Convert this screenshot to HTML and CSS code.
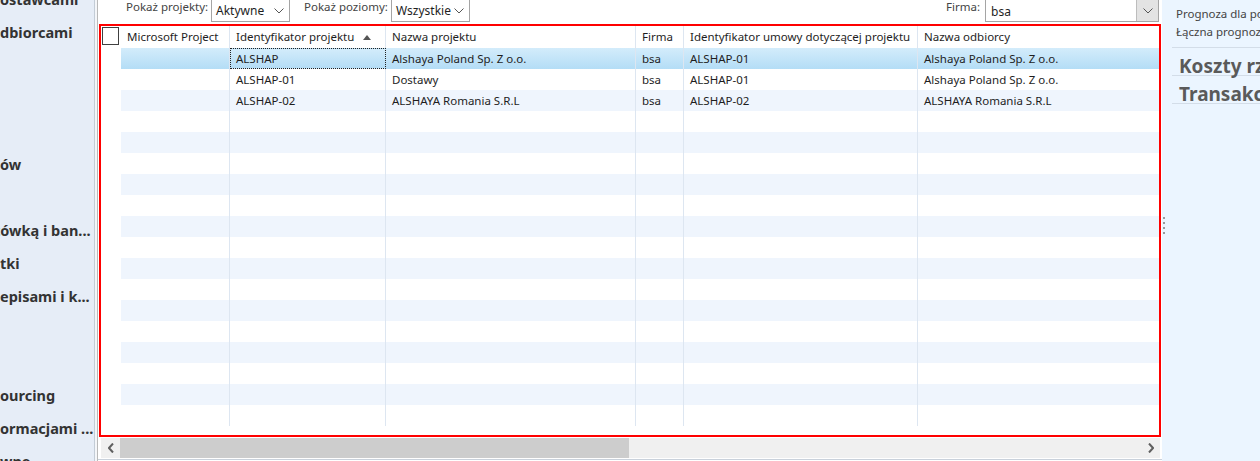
FILE: index.html
```html
<!DOCTYPE html>
<html lang="pl">
<head>
<meta charset="utf-8">
<title>Projekty</title>
<link rel="stylesheet" href="styles.css">
</head>
<body>
<div class="app">
  <nav class="nav">
    <div class="nav-list">
      <div class="nav-item">ostawcami</div>
      <div class="nav-item">dbiorcami</div>
      <div class="nav-item"></div>
      <div class="nav-item"></div>
      <div class="nav-item"></div>
      <div class="nav-item">ów</div>
      <div class="nav-item"></div>
      <div class="nav-item nav-shift">tówką i ban...</div>
      <div class="nav-item">tki</div>
      <div class="nav-item">episami i k...</div>
      <div class="nav-item"></div>
      <div class="nav-item"></div>
      <div class="nav-item">ourcing</div>
      <div class="nav-item">ormacjami ...</div>
      <div class="nav-item">wne</div>
    </div>
  </nav>
  <div class="split"></div>
  <main class="main">
    <div class="filters">
      <span class="flabel first">Pokaż projekty:</span>
      <div class="combo"><span>Aktywne</span><svg class="chev" viewBox="0 0 10 6" width="10" height="6"><path d="M0.5 0.5 L5 5 L9.5 0.5" fill="none" stroke="#555" stroke-width="1"/></svg></div>
      <span class="flabel second">Pokaż poziomy:</span>
      <div class="combo"><span>Wszystkie</span><svg class="chev" viewBox="0 0 10 6" width="10" height="6"><path d="M0.5 0.5 L5 5 L9.5 0.5" fill="none" stroke="#555" stroke-width="1"/></svg></div>
      <span class="fspacer"></span>
      <span class="flabel third">Firma:</span>
      <div class="lookup"><span class="lookup-val">bsa</span><span class="lookup-btn"><svg viewBox="0 0 10 6" width="10" height="6"><path d="M0.5 0.5 L5 5 L9.5 0.5" fill="none" stroke="#555" stroke-width="1"/></svg></span></div>
    </div>

    <div class="grid">
      <div class="row head">
        <div class="cell sel"><span class="check"></span></div>
        <div class="cell">Microsoft Project</div>
        <div class="cell sorted">Identyfikator projektu<svg class="sort" viewBox="0 0 8 5" width="8" height="5"><path d="M0 5 L4 0 L8 5 Z" fill="#555"/></svg></div>
        <div class="cell">Nazwa projektu</div>
        <div class="cell">Firma</div>
        <div class="cell">Identyfikator umowy dotyczącej projektu</div>
        <div class="cell">Nazwa odbiorcy</div>
      </div>
      <div class="row selected">
        <div class="cell sel"></div>
        <div class="cell"></div>
        <div class="cell focus">ALSHAP</div>
        <div class="cell">Alshaya Poland Sp. Z o.o.</div>
        <div class="cell">bsa</div>
        <div class="cell">ALSHAP-01</div>
        <div class="cell">Alshaya Poland Sp. Z o.o.</div>
      </div>
      <div class="row">
        <div class="cell sel"></div>
        <div class="cell"></div>
        <div class="cell">ALSHAP-01</div>
        <div class="cell">Dostawy</div>
        <div class="cell">bsa</div>
        <div class="cell">ALSHAP-01</div>
        <div class="cell">Alshaya Poland Sp. Z o.o.</div>
      </div>
      <div class="row alt">
        <div class="cell sel"></div>
        <div class="cell"></div>
        <div class="cell">ALSHAP-02</div>
        <div class="cell">ALSHAYA Romania S.R.L</div>
        <div class="cell">bsa</div>
        <div class="cell">ALSHAP-02</div>
        <div class="cell">ALSHAYA Romania S.R.L</div>
      </div>
      <div class="row"><div class="cell sel"></div><div class="cell"></div><div class="cell"></div><div class="cell"></div><div class="cell"></div><div class="cell"></div><div class="cell"></div></div>
      <div class="row alt"><div class="cell sel"></div><div class="cell"></div><div class="cell"></div><div class="cell"></div><div class="cell"></div><div class="cell"></div><div class="cell"></div></div>
      <div class="row"><div class="cell sel"></div><div class="cell"></div><div class="cell"></div><div class="cell"></div><div class="cell"></div><div class="cell"></div><div class="cell"></div></div>
      <div class="row alt"><div class="cell sel"></div><div class="cell"></div><div class="cell"></div><div class="cell"></div><div class="cell"></div><div class="cell"></div><div class="cell"></div></div>
      <div class="row"><div class="cell sel"></div><div class="cell"></div><div class="cell"></div><div class="cell"></div><div class="cell"></div><div class="cell"></div><div class="cell"></div></div>
      <div class="row alt"><div class="cell sel"></div><div class="cell"></div><div class="cell"></div><div class="cell"></div><div class="cell"></div><div class="cell"></div><div class="cell"></div></div>
      <div class="row"><div class="cell sel"></div><div class="cell"></div><div class="cell"></div><div class="cell"></div><div class="cell"></div><div class="cell"></div><div class="cell"></div></div>
      <div class="row alt"><div class="cell sel"></div><div class="cell"></div><div class="cell"></div><div class="cell"></div><div class="cell"></div><div class="cell"></div><div class="cell"></div></div>
      <div class="row"><div class="cell sel"></div><div class="cell"></div><div class="cell"></div><div class="cell"></div><div class="cell"></div><div class="cell"></div><div class="cell"></div></div>
      <div class="row alt"><div class="cell sel"></div><div class="cell"></div><div class="cell"></div><div class="cell"></div><div class="cell"></div><div class="cell"></div><div class="cell"></div></div>
      <div class="row"><div class="cell sel"></div><div class="cell"></div><div class="cell"></div><div class="cell"></div><div class="cell"></div><div class="cell"></div><div class="cell"></div></div>
      <div class="row alt"><div class="cell sel"></div><div class="cell"></div><div class="cell"></div><div class="cell"></div><div class="cell"></div><div class="cell"></div><div class="cell"></div></div>
      <div class="row"><div class="cell sel"></div><div class="cell"></div><div class="cell"></div><div class="cell"></div><div class="cell"></div><div class="cell"></div><div class="cell"></div></div>
      <div class="row alt"><div class="cell sel"></div><div class="cell"></div><div class="cell"></div><div class="cell"></div><div class="cell"></div><div class="cell"></div><div class="cell"></div></div>
      <div class="row"><div class="cell sel"></div><div class="cell"></div><div class="cell"></div><div class="cell"></div><div class="cell"></div><div class="cell"></div><div class="cell"></div></div>
    </div>

    <div class="hscroll">
      <span class="sbtn"><svg viewBox="0 0 6 10" width="6" height="10"><path d="M5 0.5 L1 5 L5 9.5" fill="none" stroke="#606060" stroke-width="2"/></svg></span>
      <span class="thumb"></span>
      <span class="track"></span>
      <span class="sbtn"><svg viewBox="0 0 6 10" width="6" height="10"><path d="M1 0.5 L5 5 L1 9.5" fill="none" stroke="#606060" stroke-width="2"/></svg></span>
    </div>
    <div class="bottom"><span class="hgrip"><i></i><i></i><i></i><i></i></span></div>
  </main>
  <aside class="side">
    <div class="vgrip"><i></i><i></i><i></i><i></i></div>
    <div class="side-body">
      <div class="side-text">Prognoza dla pozycji</div>
      <div class="side-text">Łączna prognoza</div>
      <div class="side-head">Koszty rzeczywiste</div>
      <div class="side-head">Transakcje</div>
    </div>
  </aside>
</div>
</body>
</html>
```

FILE: styles.css
```css
* { box-sizing: border-box; }
html, body { margin: 0; padding: 0; }
body {
  width: 1260px;
  height: 461px;
  overflow: hidden;
  background: #fff;
  font-family: "Noto Sans", "Open Sans", sans-serif;
  font-size: 11.5px;
  color: #1e1e1e;
}
.app {
  display: flex;
  height: 461px;
}

/* left navigation */
.nav {
  width: 95px;
  flex: none;
  background: #e6edf7;
  border-right: 1px solid #c3ccd6;
  overflow: hidden;
}
.nav-list {
  margin-top: -17px;
}
.nav-item {
  height: 33px;
  line-height: 33px;
  font-weight: 700;
  font-size: 14.5px;
  color: #333;
  white-space: nowrap;
}
.nav-shift { text-indent: -6px; }
.split {
  width: 2px;
  flex: none;
  background: #f4f6f9;
}

/* main */
.main {
  width: 1065px;
  flex: none;
  border-left: 1px solid #b9b9b9;
  display: flex;
  flex-direction: column;
  overflow: hidden;
}
.filters {
  height: 24px;
  flex: none;
  display: flex;
  align-items: flex-start;
  padding-left: 28px;
  padding-right: 3px;
  overflow: hidden;
}
.flabel {
  color: #444;
  line-height: 14px;
  white-space: nowrap;
}
.flabel.first { width: 85px; }
.flabel.second { margin-left: 14px; width: 87px; }
.flabel.third { margin-right: 5px; }
.fspacer { flex: 1; }
.combo {
  width: 79px;
  height: 28px;
  margin-top: -6px;
  border: 1px solid #a5a5a5;
  background: #fff;
  display: flex;
  align-items: center;
  justify-content: space-between;
  padding: 5px 3px 0 4px;
  font-size: 12px;
  color: #1e1e1e;
}
.chev { margin-right: 2px; }
.lookup {
  width: 174px;
  height: 28px;
  margin-top: -6px;
  border: 1px solid #a5a5a5;
  background: #fff;
  display: flex;
}
.lookup-val {
  flex: 1;
  padding: 8px 0 0 5px;
  font-size: 12px;
}
.lookup-btn {
  width: 22px;
  background: #e3e3e3;
  border-left: 1px solid #bdbdbd;
  display: flex;
  align-items: center;
  justify-content: center;
  padding-top: 6px;
}

/* grid */
.grid {
  height: 413px;
  margin-left: 1px;
  margin-right: 1px;
  border: 2px solid #ff0000;
  overflow: hidden;
  flex: none;
}
.row {
  display: grid;
  grid-template-columns: 20px 109px 156px 250px 48px 234px 1fr;
  height: 21px;
}
.row.head { height: 22px; }
.cell {
  border-right: 1px solid #dde6f1;
  padding: 0 6px;
  line-height: 21px;
  white-space: nowrap;
  overflow: hidden;
}
.cell:last-child { border-right: none; }
.cell.sel {
  background: #fff;
  padding: 0;
  border-right: none;
}
.row.alt .cell { background: #eff5fd; }
.row.alt .cell.sel { background: #fff; }
.row.selected .cell {
  background: linear-gradient(#d3ecfb, #b4ddf6);
}
.row.selected .cell.sel { background: #fff; }
.cell.focus {
  border: 1px dotted #222;
  line-height: 19px;
  padding-left: 5px;
}
.head .cell {
  line-height: 22px;
  background: #fff;
  color: #1e1e1e;
}
.head .cell.sel {
  display: flex;
  align-items: flex-start;
  padding: 1px 0 0 1px;
}
.check {
  width: 17px;
  height: 18px;
  border: 1px solid #404040;
  background: #fff;
}
.sorted {
  display: flex;
  align-items: center;
  justify-content: space-between;
}
.sort { margin-right: 8px; }

/* scrollbar */
.hscroll {
  height: 20px;
  margin: 1px 2px 0 3px;
  display: flex;
  background: #f0f0f0;
  flex: none;
}
.sbtn {
  width: 19px;
  display: flex;
  align-items: center;
  justify-content: center;
  flex: none;
}
.thumb {
  width: 509px;
  background: #cdcdcd;
  flex: none;
}
.track { flex: 1; }
.bottom {
  flex: none;
  height: 4px;
  border-top: 1px solid #c9d1db;
  margin-top: 1px;
  display: flex;
  padding-left: 523px;
  overflow: hidden;
}
.hgrip {
  display: flex;
  gap: 3px;
  margin-top: 1px;
}
.hgrip i {
  width: 2px;
  height: 2px;
  background: #9a9a9a;
  display: block;
}

/* right panel */
.side {
  flex: 1;
  background: #ebf5ff;
  display: flex;
  overflow: hidden;
}
.vgrip {
  width: 10px;
  flex: none;
  display: flex;
  flex-direction: column;
  gap: 3px;
  padding-top: 217px;
  padding-left: 1px;
}
.vgrip i {
  display: block;
  width: 2px;
  height: 2px;
  background: #9a9a9a;
}
.side-body {
  flex: 1;
  padding-top: 5px;
  white-space: nowrap;
}
.side-text {
  height: 18px;
  line-height: 18px;
  padding-left: 4px;
  color: #444;
}
.side-text:nth-child(2) {
  border-bottom: 1px solid #d3dde8;
  height: 25px;
}
.side-head {
  height: 28px;
  padding-top: 8px;
  line-height: 20px;
  padding-left: 7px;
  font-size: 19px;
  font-weight: 700;
  color: #5a5a5a;
  border-bottom: 1px solid #d3dde8;
}
```
